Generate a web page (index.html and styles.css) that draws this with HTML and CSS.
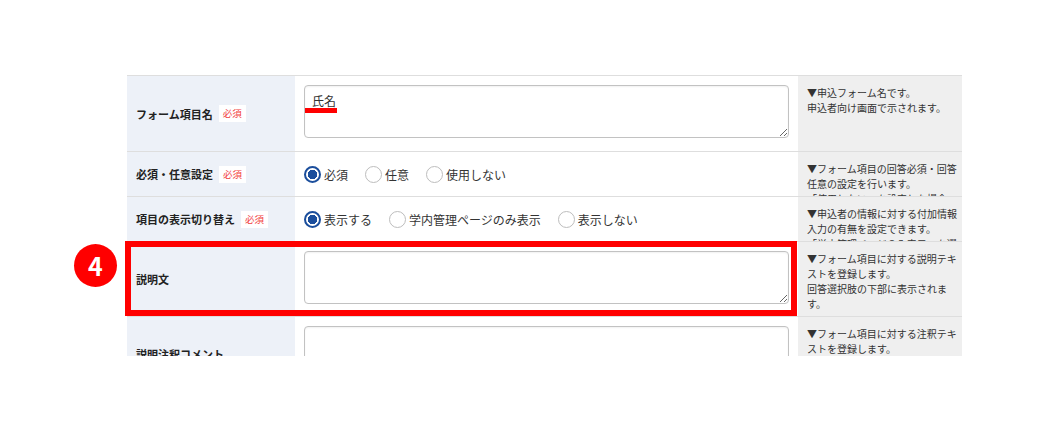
FILE: index.html
```html
<!DOCTYPE html>
<html lang="ja">
  <head>
    <meta charset="UTF-8" />
    <meta name="viewport" content="width=device-width, initial-scale=1.0" />
    <title>フォーム項目設定</title>
    <link rel="stylesheet" href="styles.css">
  </head>
  <body>
    <div class="page">
      <div class="sheet">
        <div class="form-table">
          <!-- フォーム項目名 -->
          <div class="row row-tall">
            <div class="cell head">フォーム項目名<span class="req">必須</span></div>
            <div class="cell body">
              <div class="field">
                <textarea class="area">氏名</textarea>
                <span class="mark"></span>
              </div>
            </div>
            <div class="cell note">▼申込フォーム名です。<br>申込者向け画面で示されます。</div>
          </div>

          <!-- 必須・任意設定 -->
          <div class="row row-short">
            <div class="cell head">必須・任意設定<span class="req">必須</span></div>
            <div class="cell body choices">
              <label class="choice"><input type="radio" name="need" checked><span>必須</span></label>
              <label class="choice"><input type="radio" name="need"><span>任意</span></label>
              <label class="choice"><input type="radio" name="need"><span>使用しない</span></label>
            </div>
            <div class="cell note">▼フォーム項目の回答必須・回答任意の設定を行います。<br>「使用しない」を設定した場合は、申込者向け画面に表示されません。</div>
          </div>

          <!-- 項目の表示切り替え -->
          <div class="row row-short">
            <div class="cell head">項目の表示切り替え<span class="req">必須</span></div>
            <div class="cell body choices">
              <label class="choice"><input type="radio" name="show" checked><span>表示する</span></label>
              <label class="choice"><input type="radio" name="show"><span>学内管理ページのみ表示</span></label>
              <label class="choice"><input type="radio" name="show"><span>表示しない</span></label>
            </div>
            <div class="cell note">▼申込者の情報に対する付加情報入力の有無を設定できます。<br>「学内管理ページのみ表示」を選択すると学内のみ入力できます。</div>
          </div>

          <!-- 説明文 -->
          <div class="row row-tall">
            <div class="cell head">説明文</div>
            <div class="cell body">
              <div class="field">
                <textarea class="area"></textarea>
              </div>
            </div>
            <div class="cell note">▼フォーム項目に対する説明テキストを登録します。<br>回答選択肢の下部に表示されます。</div>
          </div>

          <!-- 説明注釈コメント -->
          <div class="row row-tall">
            <div class="cell head">説明注釈コメント</div>
            <div class="cell body">
              <div class="field">
                <textarea class="area"></textarea>
              </div>
            </div>
            <div class="cell note">▼フォーム項目に対する注釈テキストを登録します。</div>
          </div>
        </div>
      </div>

      <!-- 手順番号と強調枠 -->
      <div class="step">4</div>
      <div class="focus"></div>
    </div>
  </body>
</html>
```

FILE: styles.css
```css
:root {
  --head-bg: #edf1f8;
  --note-bg: #efefef;
  --line: #dedede;
  --accent: #ff0000;
  --radio: #1b4e9c;
}

body {
  margin: 0;
  background: #fff;
  font-family: "Noto Sans CJK JP", "Noto Sans", sans-serif;
  color: #333;
}

.page {
  position: relative;
  width: 1055px;
  height: 446px;
  overflow: hidden;
}

/* 表示領域（下端・右端で切れる） */
.sheet {
  margin: 75px 0 0 127px;
  width: 835px;
  height: 281px;
  overflow: hidden;
}

.form-table {
  display: flex;
  flex-direction: column;
}

.row {
  display: grid;
  grid-template-columns: 168px 503px 164px;
  grid-template-rows: minmax(0, 1fr);
  border-top: 1px solid var(--line);
  box-sizing: border-box;
  flex-shrink: 0;
}

.row-tall {
  height: 76px;
}

.row-short {
  height: 45px;
}

.row + .row-tall {
  height: 75px;
}

.cell {
  box-sizing: border-box;
  overflow: hidden;
  min-height: 0;
}

.head {
  display: flex;
  align-items: center;
  padding-left: 9px;
  background: var(--head-bg);
  font-size: 11px;
  font-weight: 700;
  color: #222;
}

.req {
  margin-left: 6px;
  padding: 2px 4px;
  background: #fff;
  color: #f23c3c;
  font-size: 9.5px;
  font-weight: 400;
  line-height: 13px;
}

.body {
  padding: 9px 8px 0 9px;
  background: #fff;
}

.field {
  position: relative;
}

.area {
  display: block;
  box-sizing: border-box;
  width: 485px;
  height: 53px;
  margin: 0;
  padding: 7px 7px;
  border: 1px solid #c2c2c2;
  border-radius: 4px;
  box-shadow: inset 0 1px 2px rgba(0, 0, 0, 0.06);
  font-family: inherit;
  font-size: 12px;
  line-height: 16px;
  color: #333;
  background: #fff;
}

/* 入力値の下線マーカー */
.mark {
  position: absolute;
  left: 1px;
  top: 23px;
  width: 32px;
  height: 5px;
  background: var(--accent);
}

.choices {
  display: flex;
  align-items: center;
  gap: 17px;
  padding-top: 0;
}

.choice {
  display: flex;
  align-items: center;
  gap: 3px;
  font-size: 12px;
  color: #333;
}

.choice input {
  appearance: none;
  -webkit-appearance: none;
  width: 17px;
  height: 17px;
  margin: 0;
  border: 1.5px solid #bdbdbd;
  border-radius: 50%;
  background: #fff;
  box-sizing: border-box;
}

.choice input:checked {
  border: 2px solid var(--radio);
  background: radial-gradient(circle, var(--radio) 0 4.5px, #fff 5px);
}

.note {
  padding: 9px 0 0 9px;
  background: var(--note-bg);
  font-size: 10px;
  line-height: 15px;
  color: #333;
}

/* 手順番号 */
.step {
  position: absolute;
  left: 74px;
  top: 244px;
  width: 43px;
  height: 43px;
  border-radius: 50%;
  background: var(--accent);
  color: #fff;
  display: flex;
  align-items: center;
  justify-content: center;
  font-size: 25px;
  font-weight: 700;
  line-height: 1;
}

/* 強調枠 */
.focus {
  position: absolute;
  left: 125px;
  top: 241px;
  width: 672px;
  height: 75px;
  border: 6px solid var(--accent);
  box-sizing: border-box;
}
```
